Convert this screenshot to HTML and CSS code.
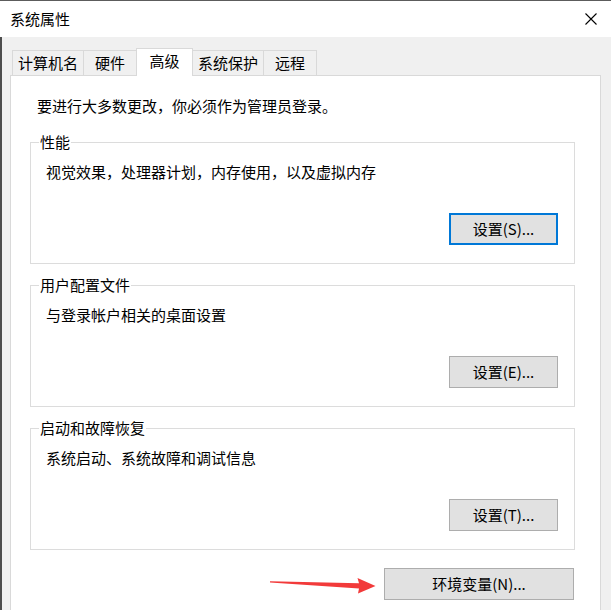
FILE: index.html
```html
<!DOCTYPE html>
<html lang="zh-CN">
<head>
<meta charset="utf-8">
<title>系统属性</title>
<link rel="stylesheet" href="styles.css">
</head>
<body>
<div class="window">
  <div class="titlebar">
    <span class="title">系统属性</span>
    <span class="close">
      <svg width="12" height="12" viewBox="0 0 12 12"><path d="M0.5 0.5 L11.5 11.5 M11.5 0.5 L0.5 11.5" stroke="#000" stroke-width="1.1" fill="none"/></svg>
    </span>
  </div>
  <div class="body">
    <div class="tabs">
      <div class="tab">计算机名</div>
      <div class="tab">硬件</div>
      <div class="tab tab-active">高级</div>
      <div class="tab">系统保护</div>
      <div class="tab">远程</div>
    </div>
    <div class="panel">
      <p class="intro">要进行大多数更改，你必须作为管理员登录。</p>
      <fieldset class="group">
        <legend>性能</legend>
        <p class="desc">视觉效果，处理器计划，内存使用，以及虚拟内存</p>
        <div class="actions"><button class="btn btn-focus">设置(S)...</button></div>
      </fieldset>
      <fieldset class="group">
        <legend>用户配置文件</legend>
        <p class="desc">与登录帐户相关的桌面设置</p>
        <div class="actions"><button class="btn">设置(E)...</button></div>
      </fieldset>
      <fieldset class="group">
        <legend>启动和故障恢复</legend>
        <p class="desc">系统启动、系统故障和调试信息</p>
        <div class="actions"><button class="btn">设置(T)...</button></div>
      </fieldset>
      <div class="footer"><button class="btn btn-wide">环境变量(N)...</button></div>
    </div>
  </div>
  <svg class="arrow" width="611" height="610" viewBox="0 0 611 610">
    <polygon points="270,581.3 359,583.2 357.5,578 375.5,586 358,593.5 359,588.6 270,582.6" fill="#f23a3a"/>
  </svg>
</div>
</body>
</html>
```
FILE: styles.css
```css
html, body {
  margin: 0;
  padding: 0;
}
body {
  background: #f0f0f0;
  font-family: "Noto Sans CJK SC", "Noto Sans", sans-serif;
  font-size: 15px;
  color: #000;
}
.window {
  position: relative;
  width: 611px;
  height: 610px;
  overflow: hidden;
  background: #f0f0f0;
}
.titlebar {
  height: 36px;
  border-top: 1px solid #5c5c5c;
  background: #fff;
  display: flex;
  align-items: center;
  justify-content: space-between;
  padding: 0 14px 0 10px;
}
.title {
  line-height: 20px;
}
.close {
  display: flex;
  width: 12px;
  height: 12px;
}
.body {
  border-left: 2px solid #4d4d4d;
  padding: 11px 0 0 8px;
  height: 600px;
}
.tabs {
  display: flex;
  align-items: flex-end;
  height: 27px;
  padding-left: 3px;
}
.tab {
  box-sizing: border-box;
  height: 25px;
  min-width: 54px;
  margin-left: -1px;
  padding: 0 5px;
  border: 1px solid #d9d9d9;
  border-bottom: none;
  background: #f0f0f0;
  line-height: 24px;
  text-align: center;
  white-space: nowrap;
}
.tab-active {
  position: relative;
  z-index: 1;
  height: 28px;
  margin-bottom: -1px;
  background: #fff;
  min-width: 57px;
}
.panel {
  box-sizing: border-box;
  width: 591px;
  height: 560px;
  background: #fff;
  border: 1px solid #d9d9d9;
  padding: 0 26px 0 0;
}
.intro {
  margin: 0;
  padding: 20px 0 0 26px;
  line-height: 20px;
}
.group {
  margin: 16px 0 0 19px;
  width: 545px;
  box-sizing: border-box;
  min-width: 0;
  border: 1px solid #dcdcdc;
  padding: 10px 16px 18px 15px;
}
.group + .group {
  margin-top: 11px;
}
.group legend {
  margin-left: -7px;
  padding: 0 1px;
  line-height: 20px;
}
.desc {
  margin: 0;
  line-height: 20px;
}
.actions {
  display: flex;
  justify-content: flex-end;
  margin-top: 31px;
}
.btn {
  box-sizing: border-box;
  width: 109px;
  height: 32px;
  margin: 0;
  padding: 0;
  border: 1px solid #adadad;
  background: #e1e1e1;
  font-family: inherit;
  font-size: 15px;
  color: #000;
  line-height: 20px;
}
.btn-focus {
  border: 2px solid #0078d7;
}
.footer {
  display: flex;
  justify-content: flex-end;
  margin-top: 18px;
}
.btn-wide {
  width: 190px;
}
.arrow {
  position: absolute;
  left: 0;
  top: 0;
  pointer-events: none;
}
```
